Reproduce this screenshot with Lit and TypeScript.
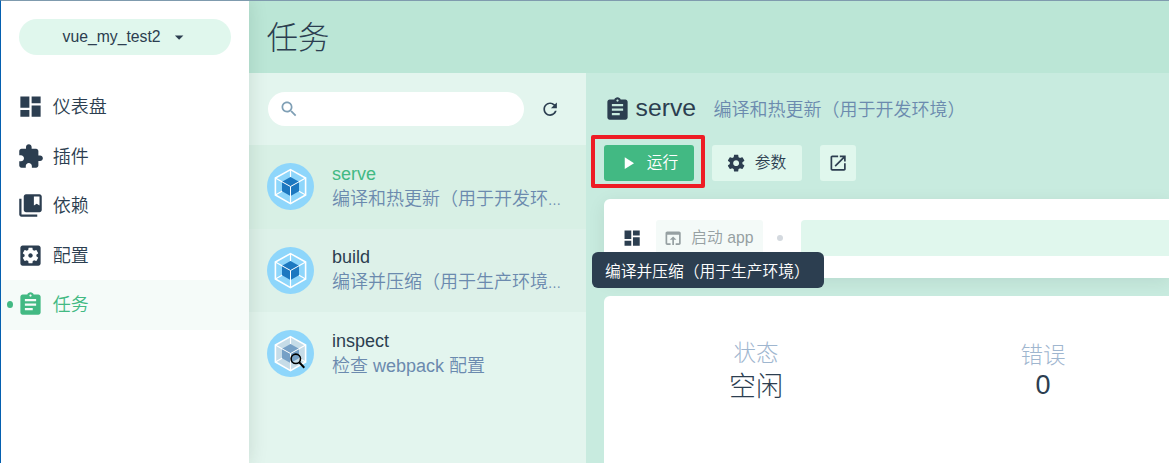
import { LitElement, html, css, svg, nothing } from "lit";
import { customElement, property } from "lit/decorators.js";
import { classMap } from "lit/directives/class-map.js";

const ICONS: Record<string, string> = {
  dashboard: "M3 13h8V3H3v10zm0 8h8v-6H3v6zm10 0h8V11h-8v10zm0-18v6h8V3h-8z",
  extension:
    "M20.5 11H19V7c0-1.1-.9-2-2-2h-4V3.5C13 2.12 11.88 1 10.5 1S8 2.12 8 3.5V5H4c-1.1 0-1.99.9-1.99 2v3.8H3.5c1.49 0 2.7 1.21 2.7 2.7s-1.21 2.7-2.7 2.7H2V20c0 1.1.9 2 2 2h3.8v-1.5c0-1.49 1.21-2.7 2.7-2.7 1.49 0 2.7 1.21 2.7 2.7V22H17c1.1 0 2-.9 2-2v-4h1.5c1.38 0 2.5-1.12 2.5-2.5S21.88 11 20.5 11z",
  bookmark:
    "M4 6H2v14c0 1.1.9 2 2 2h14v-2H4V6zM20 2H8c-1.1 0-2 .9-2 2v12c0 1.1.9 2 2 2h12c1.1 0 2-.9 2-2V4c0-1.1-.9-2-2-2zm0 10l-2.5-1.5L15 12V4h5v8z",
  configuration:
    "M12 10c-1.1 0-2 .9-2 2s.9 2 2 2 2-.9 2-2-.9-2-2-2zm7-7H5c-1.11 0-2 .9-2 2v14c0 1.1.89 2 2 2h14c1.11 0 2-.9 2-2V5c0-1.1-.89-2-2-2zm-1.75 9c0 .23-.02.46-.05.68l1.48 1.16c.13.11.17.3.08.45l-1.4 2.42c-.09.15-.27.21-.43.15l-1.74-.7c-.36.28-.76.51-1.18.69l-.26 1.85c-.03.17-.18.3-.35.3h-2.8c-.17 0-.32-.13-.35-.29l-.26-1.85c-.43-.18-.82-.41-1.18-.69l-1.74.7c-.16.06-.34 0-.43-.15l-1.4-2.42c-.09-.15-.05-.34.08-.45l1.48-1.16c-.03-.23-.05-.46-.05-.69 0-.23.02-.46.05-.68l-1.48-1.16c-.13-.11-.17-.3-.08-.45l1.4-2.42c.09-.15.27-.21.43-.15l1.74.7c.36-.28.76-.51 1.18-.69l.26-1.85c.03-.17.18-.3.35-.3h2.8c.17 0 .32.13.35.29l.26 1.85c.43.18.82.41 1.18.69l1.74-.7c.16-.06.34 0 .43.15l1.4 2.42c.09.15.05.34-.08.45l-1.48 1.16c.03.23.05.46.05.69z",
  assignment:
    "M19 3h-4.18C14.4 1.84 13.3 1 12 1c-1.3 0-2.4.84-2.82 2H5c-1.1 0-2 .9-2 2v14c0 1.1.9 2 2 2h14c1.1 0 2-.9 2-2V5c0-1.1-.9-2-2-2zm-7 0c.55 0 1 .45 1 1s-.45 1-1 1-1-.45-1-1 .45-1 1-1zm2 14H7v-2h7v2zm3-4H7v-2h10v2zm0-4H7V7h10v2z",
  settings:
    "M19.43 12.98c.04-.32.07-.64.07-.98s-.03-.66-.07-.98l2.11-1.65c.19-.15.24-.42.12-.64l-2-3.46c-.12-.22-.39-.3-.61-.22l-2.49 1c-.52-.4-1.08-.73-1.69-.98l-.38-2.65C14.46 2.18 14.25 2 14 2h-4c-.25 0-.46.18-.49.42l-.38 2.65c-.61.25-1.17.59-1.69.98l-2.49-1c-.23-.09-.49 0-.61.22l-2 3.46c-.13.22-.07.49.12.64l2.11 1.65c-.04.32-.07.65-.07.98s.03.66.07.98l-2.11 1.65c-.19.15-.24.42-.12.64l2 3.46c.12.22.39.3.61.22l2.49-1c.52.4 1.08.73 1.69.98l.38 2.65c.03.24.24.42.49.42h4c.25 0 .46-.18.49-.42l.38-2.65c.61-.25 1.17-.59 1.69-.98l2.49 1c.23.09.49 0 .61-.22l2-3.46c.12-.22.07-.49-.12-.64l-2.11-1.65zM12 15.5c-1.93 0-3.5-1.57-3.5-3.5s1.57-3.5 3.5-3.5 3.5 1.57 3.5 3.5-1.57 3.5-3.5 3.5z",
  dropdown: "M7 10l5 5 5-5z",
  search:
    "M15.5 14h-.79l-.28-.27C15.41 12.59 16 11.11 16 9.5 16 5.91 13.09 3 9.5 3S3 5.91 3 9.5 5.91 16 9.5 16c1.61 0 3.09-.59 4.23-1.57l.27.28v.79l5 4.99L20.49 19l-4.99-5zm-6 0C7.01 14 5 11.99 5 9.5S7.01 5 9.5 5 14 7.01 14 9.5 11.99 14 9.5 14z",
  refresh:
    "M17.65 6.35C16.2 4.9 14.21 4 12 4c-4.42 0-7.99 3.58-7.99 8s3.57 8 7.99 8c3.73 0 6.84-2.55 7.73-6h-2.08c-.82 2.33-3.04 4-5.65 4-3.31 0-6-2.69-6-6s2.69-6 6-6c1.66 0 3.14.69 4.22 1.78L13 11h7V4l-2.35 2.35z",
  play: "M8 5v14l11-7z",
  external:
    "M19 19H5V5h7V3H5c-1.11 0-2 .9-2 2v14c0 1.1.89 2 2 2h14c1.1 0 2-.9 2-2v-7h-2v7zM14 3v2h3.59l-9.83 9.83 1.41 1.41L19 6.41V10h2V3h-7z",
  browser:
    "M19 4H5c-1.11 0-2 .9-2 2v12c0 1.1.89 2 2 2h4v-2H5V8h14v10h-4v2h4c1.1 0 2-.9 2-2V6c0-1.1-.89-2-2-2zm-7 6l-4 4h3v6h2v-6h3l-4-4z",
};

@customElement("ui-icon")
class UiIcon extends LitElement {
  @property() name = "";
  static styles = css`
    :host { display: block; flex: none; width: 20.25px; height: 20.25px; }
    svg { display: block; width: 100%; height: 100%; fill: currentColor; }
  `;
  render() {
    return html`<svg viewBox="0 0 24 24"><path d=${ICONS[this.name] ?? ""}></path></svg>`;
  }
}

@customElement("webpack-logo")
class WebpackLogo extends LitElement {
  @property({ type: Boolean }) inspect = false;
  static styles = css`
    :host { display: block; flex: none; width: 47px; height: 47px; }
    svg { display: block; width: 100%; height: 100%; }
  `;
  render() {
    const shell = this.inspect ? "#c6dce8" : "#8ed6fb";
    const core = this.inspect ? "#76a0c6" : "#1c78c0";
    return html`<svg viewBox="0 0 47 47">
      <circle cx="23.5" cy="23.5" r="23.5" fill="#8ed6fb"></circle>
      <path d="M23.5 6.6L38.6 15V32L23.5 40.6L8.4 32V15Z" fill=${shell} stroke="#fff" stroke-width="1.6"></path>
      <path d="M23.5 6.6V14M8.4 15L15.4 19M38.6 15L31.6 19M8.4 32L15.4 28M38.6 32L31.6 28M23.5 40.6V33" stroke="#fff" stroke-width="1.2"></path>
      <path d="M23.5 14L32 18.7V28.3L23.5 33L15 28.3V18.7Z" fill=${core}></path>
      <path d="M15 18.8L23.5 23.5L32 18.8M23.5 23.5V33" fill="none" stroke="#fff" stroke-width="1"></path>
      ${this.inspect
        ? svg`<circle cx="28.8" cy="28.8" r="4.7" fill="none" stroke="#000" stroke-width="1.6"></circle><path d="M32.2 32.3L37.3 37.7" stroke="#000" stroke-width="2"></path>`
        : nothing}
    </svg>`;
  }
}

const NAV = [
  { icon: "dashboard", label: "仪表盘" },
  { icon: "extension", label: "插件" },
  { icon: "bookmark", label: "依赖" },
  { icon: "configuration", label: "配置" },
  { icon: "assignment", label: "任务", active: true },
];

const TASKS = [
  { name: "serve", description: "编译和热更新（用于开发环境）", state: "selected" },
  { name: "build", description: "编译并压缩（用于生产环境）", state: "hovered" },
  { name: "inspect", description: "检查 webpack 配置", state: "" },
];

@customElement("app-root")
class AppRoot extends LitElement {
  static styles = css`
    * { box-sizing: border-box; }
    :host {
      display: flex; flex-direction: column; position: relative;
      width: 100%; height: 463px; overflow: hidden;
      border-top: 1px solid #7f9bae; border-left: 1px solid #0560b0;
      background: #c8ebdf; color: #2c3e50;
      font: 350 18px/24px "Liberation Sans", "Noto Sans CJK SC", sans-serif;
      white-space: nowrap;
    }
    .shell { display: flex; flex: 1; min-height: 0; }
    .sidebar {
      width: 248px; flex: none; background: #fff; position: relative; z-index: 1;
      box-shadow: 0 0 18px rgba(0, 40, 25, 0.13); padding-top: 18px;
    }
    .project {
      display: flex; align-items: center; height: 36px; margin: 0 18px 27px;
      padding-left: 43.5px; gap: 8px; border-radius: 18px; background: #e0f7ed; font-size: 15.75px;
    }
    .nav { display: flex; align-items: center; height: 49.5px; padding-left: 15.75px; gap: 9px; }
    .nav ui-icon { width: 27px; height: 27px; }
    .nav span { padding-top: 1px; }
    .nav.active { background: #f5fbf9; color: #42b983; position: relative; }
    .nav.active::before {
      content: ""; position: absolute; left: 6px; top: 21px; width: 6px; height: 7px;
      border-radius: 50%; background: #42b983;
    }
    .main { flex: 1; min-width: 0; display: flex; flex-direction: column; }
    .header {
      height: 72px; flex: none; padding: 0 17.5px; background: #bbe6d6;
      font-weight: 300; font-size: 31.5px; line-height: 75px;
    }
    .content { flex: 1; display: flex; min-height: 0; }
    .list { width: 337px; flex: none; background: #e3f5ee; }
    .toolbar { display: flex; align-items: center; height: 72px; padding: 0 25.5px 0 19px; gap: 16px; }
    .search {
      display: flex; align-items: center; width: 256px; height: 34px; padding-left: 10.75px;
      background: #fff; border-radius: 17px; color: #7f9fb5;
    }
    .task { display: flex; align-items: center; height: 83.5px; padding: 0 20.5px 0 18px; gap: 18px; }
    .task.selected { background: #d8f0e5; }
    .task.hovered { background: #ddf1e9; }
    .task-text { min-width: 0; flex: 1; padding-bottom: 1px; }
    .task-text .description {
      overflow: hidden; text-overflow: ellipsis; font-family: "Open Sans", sans-serif;
    }
    .task-text .description span { font-family: "Liberation Sans", "Noto Sans CJK SC", sans-serif; }
    .selected .task-name { color: #42b983; }
    .description { color: #6b8aae; }
    .details { flex: 1; min-width: 0; padding: 18px 0 0 18px; display: flex; flex-direction: column; }
    .heading { display: flex; align-items: center; height: 36px; }
    .heading ui-icon { width: 27px; height: 27px; }
    .heading .description { padding-top: 2px; }
    .title { font-size: 24.75px; margin: 0 17.5px 0 4.5px; padding-bottom: 2px; }
    .actions { display: flex; gap: 18px; margin-top: 18px; }
    .button {
      display: flex; align-items: center; height: 36px; width: 90px; padding-left: 13.5px; gap: 9px;
      background: #e0f7ed; border-radius: 3px; font-size: 15.75px;
    }
    .primary { background: #42b983; color: #fff; position: relative; }
    .primary::after {
      content: ""; position: absolute; inset: -10px -11px -7px -13px;
      border: 4px solid #ee1c25; border-radius: 2px;
    }
    .square { width: 36px; padding-left: 8px; }
    .launch { width: 107px; padding-left: 7px; gap: 8px; background: #f4faf8; color: #96a0a2; }
    .views {
      display: flex; align-items: flex-start; height: 79px; flex: none; margin-top: 18px;
      padding: 21px 0 0 18px; background: #fff; border-radius: 6px 0 0 6px;
      box-shadow: 0 4px 18px rgba(0, 40, 25, 0.08);
    }
    .views > ui-icon { margin: 8px 13.75px 0 0; }
    .dot { width: 6px; height: 6px; border-radius: 50%; background: #d4d9df; margin: 15px 18px 0 13.5px; }
    .output { flex: 1; height: 36px; background: #e0f7ed; border-radius: 4px 0 0 4px; }
    .stats {
      display: flex; flex: 1; margin-top: 18px; padding-left: 8.5px; background: #fff;
      border-radius: 6px 0 0 0; position: relative;
    }
    .stat { width: 287px; flex: none; text-align: center; padding-top: 44px; font-weight: 300; }
    .stat-label { color: #9fb6cf; font-size: 22.5px; line-height: 28px; }
    .stat-value { font-size: 27px; line-height: 38px; }
    .stat.errors { padding-top: 46px; }
    .errors .stat-value { line-height: 30px; }
    .tooltip {
      position: absolute; left: 591px; top: 251px; width: 232px; height: 36px; z-index: 3;
      padding-left: 13px; background: #2c3e50; color: #fff; border-radius: 6px;
      font-size: 15.75px; line-height: 40px;
    }
  `;

  render() {
    return html`
      <div class="shell">
        <nav class="sidebar">
          <div class="project"><span>vue_my_test2</span><ui-icon name="dropdown"></ui-icon></div>
          ${NAV.map(
            (item) => html`<div class=${classMap({ nav: true, active: !!item.active })}>
              <ui-icon name=${item.icon}></ui-icon><span>${item.label}</span>
            </div>`
          )}
        </nav>
        <div class="main">
          <header class="header">任务</header>
          <div class="content">
            <section class="list">
              <div class="toolbar">
                <div class="search"><ui-icon name="search"></ui-icon></div>
                <ui-icon name="refresh"></ui-icon>
              </div>
              ${TASKS.map(
                (task) => html`<div class="task ${task.state}">
                  <webpack-logo ?inspect=${task.name === "inspect"}></webpack-logo>
                  <div class="task-text">
                    <div class="task-name">${task.name}</div>
                    <div class="description"><span>${task.description}</span></div>
                  </div>
                </div>`
              )}
            </section>
            <section class="details">
              <div class="heading">
                <ui-icon name="assignment"></ui-icon>
                <span class="title">serve</span>
                <span class="description">编译和热更新（用于开发环境）</span>
              </div>
              <div class="actions">
                <div class="button primary"><ui-icon name="play"></ui-icon><span>运行</span></div>
                <div class="button"><ui-icon name="settings"></ui-icon><span>参数</span></div>
                <div class="button square"><ui-icon name="external"></ui-icon></div>
              </div>
              <div class="views">
                <ui-icon name="dashboard"></ui-icon>
                <div class="button launch"><ui-icon name="browser"></ui-icon><span>启动 app</span></div>
                <div class="dot"></div>
                <div class="output"></div>
              </div>
              <div class="stats">
                <div class="stat"><div class="stat-label">状态</div><div class="stat-value">空闲</div></div>
                <div class="stat errors"><div class="stat-label">错误</div><div class="stat-value">0</div></div>
              </div>
            </section>
          </div>
        </div>
      </div>
      <div class="tooltip">编译并压缩（用于生产环境）</div>
    `;
  }
}
